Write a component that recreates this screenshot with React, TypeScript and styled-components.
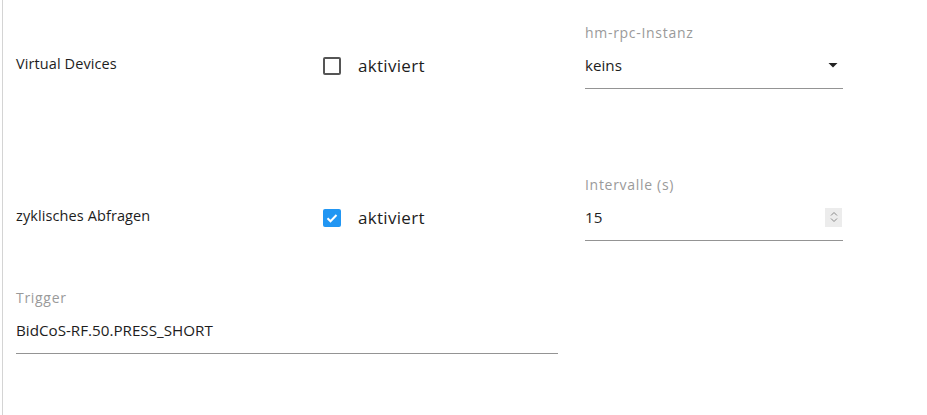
import React from 'react';
import styled, { createGlobalStyle } from 'styled-components';

const GlobalStyle = createGlobalStyle`
  body {
    margin: 0;
    background: #fff;
    font-family: "Open Sans", "Noto Sans", sans-serif;
    color: #1d1d1d;
  }
`

const Page = styled.div`
  margin-left: 2px;
  border-left: 1px solid #d4d4d4;
  height: 415px;
  box-sizing: border-box;
  padding: 25px 0 0 13px;
`

const Grid = styled.div`
  display: grid;
  grid-template-columns: 307px 262px 258px;
  grid-template-rows: 152px 113px auto;
  align-items: start;
`

const RowLabel = styled.div`
  font-size: 14.5px;
  line-height: 18px;
  padding-top: 30px;
  letter-spacing: 0.1px;
`

const CheckLine = styled.label`
  display: flex;
  align-items: center;
  gap: 17px;
  padding-top: 31px;
  font-size: 17px;
  line-height: 20px;
  letter-spacing: 0.3px;
`

const Box = styled.span<{ checked?: boolean }>`
  width: 18px;
  height: 18px;
  box-sizing: border-box;
  border-radius: 2px;
  border: ${p => (p.checked ? 'none' : '2px solid #555')};
  background: ${p => (p.checked ? '#2196f3' : 'transparent')};
  display: flex;
  align-items: center;
  justify-content: center;
`

const Field = styled.div<{ wide?: boolean }>`
  grid-column: ${p => (p.wide ? '1 / span 2' : 'auto')};
  width: ${p => (p.wide ? '542px' : '258px')};
`

const FieldLabel = styled.div`
  font-size: 14px;
  line-height: 16px;
  letter-spacing: 0.7px;
  color: #9a9a9a;
`

const ValueLine = styled.div`
  display: flex;
  align-items: center;
  justify-content: space-between;
  margin-top: 12px;
  padding-bottom: 11px;
  height: 24px;
  font-size: 15.2px;
  border-bottom: 1px solid #949494;
`

const Spinner = styled.span`
  width: 17px;
  height: 19px;
  background: #ececec;
  display: flex;
  align-items: center;
  justify-content: center;
  margin-right: 1px;
`

const Check = () => (
  <svg width="14" height="14" viewBox="0 0 14 14">
    <path d="M2.5 7.2l3 3 6-6.2" fill="none" stroke="#fff" strokeWidth="2" />
  </svg>
)

const Arrow = () => (
  <svg width="24" height="24" viewBox="0 0 24 24" style={{ marginRight: -2 }}>
    <path d="M7.5 10l4.5 4.5 4.5-4.5z" fill="#222" />
  </svg>
)

const Spin = () => (
  <svg width="10" height="14" viewBox="0 0 10 14">
    <path d="M2 5.5l3-3 3 3M2 8.5l3 3 3-3" fill="none" stroke="#8a8a8a" strokeWidth="1" />
  </svg>
)

const App: React.FC = () => {
  return <>
    <GlobalStyle />
    <Page>
      <Grid>
        <RowLabel>Virtual Devices</RowLabel>
        <CheckLine><Box />aktiviert</CheckLine>
        <Field>
          <FieldLabel>hm-rpc-Instanz</FieldLabel>
          <ValueLine>keins<Arrow /></ValueLine>
        </Field>

        <RowLabel>zyklisches Abfragen</RowLabel>
        <CheckLine><Box checked><Check /></Box>aktiviert</CheckLine>
        <Field>
          <FieldLabel>Intervalle (s)</FieldLabel>
          <ValueLine>15<Spinner><Spin /></Spinner></ValueLine>
        </Field>

        <Field wide>
          <FieldLabel>Trigger</FieldLabel>
          <ValueLine>BidCoS-RF.50.PRESS_SHORT</ValueLine>
        </Field>
      </Grid>
    </Page>
  </>;
}

export default App;
